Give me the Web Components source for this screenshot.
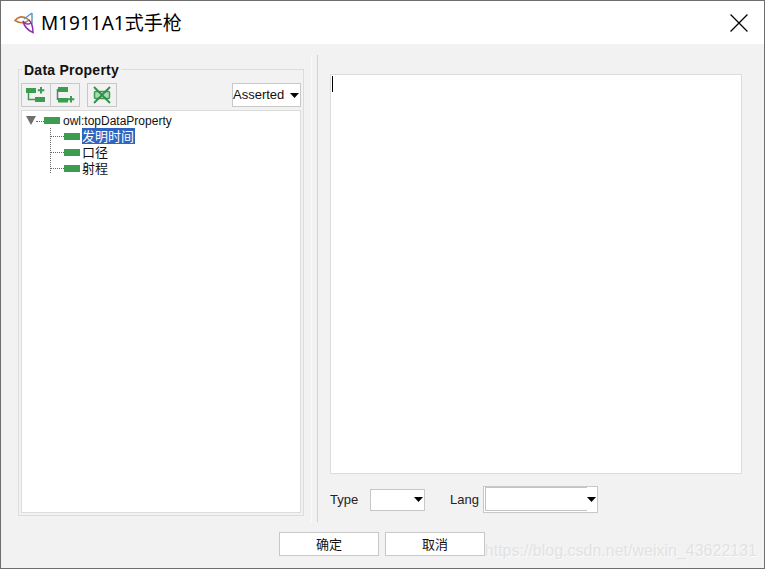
<!DOCTYPE html>
<html>
<head>
<meta charset="utf-8">
<title>M1911A1</title>
<style>
  html, body { margin: 0; padding: 0; }
  body { font-family: "Liberation Sans", "Noto Sans CJK SC", sans-serif; color: #000; }
</style>
</head>
<body>
<script>
const define = (name, css, html) => {
  customElements.define(name, class extends HTMLElement {
    constructor() {
      super();
      this.attachShadow({ mode: 'open' });
      this.shadowRoot.innerHTML = `<style>${css}</style>${html}`;
    }
  });
};

const ARROW = `<svg width="9" height="5" viewBox="0 0 9 5"><path d="M0 0h9L4.500 5z" fill="#000"/></svg>`;

define('x-titlebar', `
  :host { display: flex; align-items: center; height: 43px; background: #fff; flex: none; }
  .logo { margin-left: 13px; width: 22px; height: 22px; flex: none; }
  .text { margin-left: 5px; font: 19px/24px "Noto Sans", "Noto Sans CJK SC", sans-serif; color: #000; flex: 1; }
  .close { width: 18px; height: 18px; margin-right: 16px; flex: none; }
`, `
  <svg class="logo" viewBox="0 0 22 22" fill="none">
    <path d="M1 8.500C5 4 10 4 15 8C12 11 6 12 1 8.500Z" stroke="#c07a3c" stroke-width="1.600"/>
    <path d="M18 1L10 7M18 1L18 12" stroke="#5b9ac9" stroke-width="1.500"/>
    <path d="M9 9C10 14 13 18 19 20.500C19 15 18 11 15 8M9 9C10 12 14 13 17 11" stroke="#8a2fa8" stroke-width="1.500"/>
  </svg>
  <div class="text"><slot></slot></div>
  <svg class="close" viewBox="0 0 16 16"><path d="M.5.5l15 15M15.500.5l-15 15" stroke="#000" stroke-width="1.100" fill="none"/></svg>
`);

define('x-group', `
  :host { display: block; position: relative; box-sizing: border-box; border: 1px solid #dcdcdc; height: 447px; width: 286px; }
  .legend { position: absolute; top: -8px; left: 3px; padding: 0 2px; background: #f2f2f2; font: bold 14px/17px "Liberation Sans", sans-serif; letter-spacing: .25px; color: #111; }
  .body { display: flex; flex-direction: column; gap: 3px; padding: 13px 2px 2px 2px; height: 100%; box-sizing: border-box; }
`, `
  <div class="legend"><slot name="legend"></slot></div>
  <div class="body"><slot></slot></div>
`);

define('x-toolbar', `
  :host { display: flex; height: 24px; flex: none; }
  .spacer { flex: 1; }
`, `<slot name="tools"></slot><div class="spacer"></div><slot name="end"></slot>`);

define('x-tool', `
  :host { display: block; box-sizing: border-box; width: 30px; height: 24px; border: 1px solid #c8c8c8; background: #f2f2f2; margin-right: -1px; }
  :host([gap]) { margin-left: 8px; }
  ::slotted(svg) { display: block; }
`, `<slot></slot>`);

define('x-combo', `
  :host { display: flex; align-items: center; box-sizing: border-box; background: #fff; border: 1px solid #c8c8c8; font: 13px/16px "Liberation Sans", sans-serif; color: #111; }
  .value { flex: 1; white-space: nowrap; }
  svg { margin-right: 1px; flex: none; }
  :host([inset]) .value { align-self: stretch; margin: 0 0 1px 1px; border: solid #c4c4c4; border-width: 1px 0 1px 1px; }
`, `<span class="value"><slot></slot></span>${ARROW}`);

define('x-tree', `
  :host { display: block; box-sizing: border-box; flex: 1; background: #fff; border: 1px solid #dcdcdc; padding: 2px 0 0 4px; }
`, `<slot></slot>`);

define('x-tree-root', `
  :host { display: block; }
  .row { display: flex; align-items: center; height: 15px; }
  .tri { width: 0; height: 0; border-left: 5px solid transparent; border-right: 5px solid transparent; border-top: 9px solid #6f6f6f; flex: none; }
  .dash { width: 8px; border-top: 1px dotted #666; flex: none; margin-top: 1px; }
  .leaf { width: 16px; height: 7px; background: #3c9c50; flex: none; margin-top: -1px; }
  .label { margin-left: 3px; font: 12px/16px "Liberation Sans", sans-serif; color: #111; }
  .kids { margin-left: 24px; border-left: 1px dotted #666; height: 45px; }
`, `
  <div class="row"><span class="tri"></span><span class="dash"></span><span class="leaf"></span><span class="label"><slot name="label"></slot></span></div>
  <div class="kids"><slot></slot></div>
`);

define('x-tree-node', `
  :host { display: flex; align-items: center; height: 16px; }
  .dash { width: 13px; border-top: 1px dotted #666; flex: none; }
  .leaf { width: 16px; height: 7px; background: #3c9c50; flex: none; }
  .label { margin-left: 2px; padding: 0 1px 0 0; font: 13px/16px "Noto Sans CJK SC", sans-serif; color: #111; height: 16px; }
  :host([selected]) .label { background: #2f65c0; color: #fff; }
`, `<span class="dash"></span><span class="leaf"></span><span class="label"><slot></slot></span>`);

define('x-splitter', `
  :host { display: block; width: 7px; height: 467px; margin: 11px 0 0 7px; border-left: 1px solid #fafafa; border-right: 1px solid #d2d2d2; box-sizing: border-box; flex: none; }
`, ``);

define('x-editor', `
  :host { display: block; position: relative; box-sizing: border-box; width: 412px; height: 400px; background: #fff; border: 1px solid #dcdcdc; }
  .caret { position: absolute; left: 1px; top: 1px; width: 1px; height: 16px; background: #000; }
`, `<div class="caret"></div>`);

define('x-field-row', `
  :host { display: flex; align-items: center; height: 27px; margin-top: 12px; font: 13px/16px "Liberation Sans", sans-serif; color: #222; }
`, `<slot></slot>`);

define('x-button', `
  :host { display: flex; align-items: center; justify-content: center; box-sizing: border-box; width: 100px; height: 24px; background: #fff; border: 1px solid #c8c8c8; font: 13px/16px "Noto Sans CJK SC", sans-serif; color: #111; }
`, `<slot></slot>`);

define('x-dialog', `
  :host { display: flex; flex-direction: column; position: relative; box-sizing: border-box; width: 765px; height: 569px; background: #f2f2f2; border: 1px solid #6e6e6e; overflow: hidden; }
  .main { display: flex; flex: 1; min-height: 0; padding: 0 0 0 17px; }
  .left { padding-top: 25px; flex: none; }
  .right { padding: 30px 0 0 12px; flex: none; }
  .buttons { display: flex; gap: 6px; padding: 0 0 12px 278px; flex: none; }
  .mark { position: absolute; right: 7px; bottom: 7px; font: 16px/20px "Liberation Sans", sans-serif; color: #e2e2e2; text-shadow: 1px 1px 0 #fafafa; white-space: nowrap; }
`, `
  <slot name="title"></slot>
  <div class="main">
    <div class="left"><slot name="left"></slot></div>
    <slot name="split"></slot>
    <div class="right"><slot name="right"></slot></div>
  </div>
  <div class="buttons"><slot name="buttons"></slot></div>
  <div class="mark"><slot name="mark"></slot></div>
`);

document.body.innerHTML = `
<x-dialog>
  <x-titlebar slot="title">M1911A1式手枪</x-titlebar>

  <x-group slot="left">
    <span slot="legend">Data Property</span>
    <x-toolbar>
      <x-tool slot="tools">
        <svg width="28" height="22" viewBox="0 0 28 22" fill="none">
          <rect x="4" y="4" width="10" height="5" fill="#3c9c50"/>
          <rect x="13" y="13" width="10" height="5" fill="#3c9c50"/>
          <path d="M6.500 9v6.500h6.500" stroke="#3c9c50" stroke-width="1.500"/>
          <path d="M19 3v6.500M15.800 6.300h6.500" stroke="#3c9c50" stroke-width="2"/>
        </svg>
      </x-tool>
      <x-tool slot="tools">
        <svg width="28" height="22" viewBox="0 0 28 22" fill="none">
          <rect x="7" y="3" width="10" height="5" fill="#3c9c50"/>
          <rect x="7" y="14" width="10" height="4.500" fill="#3c9c50"/>
          <path d="M6.500 5v11" stroke="#5f7f68" stroke-width="1.500"/>
          <path d="M20 12v6.500M16.800 15.300h6.500" stroke="#3c9c50" stroke-width="2"/>
        </svg>
      </x-tool>
      <x-tool slot="tools" gap>
        <svg width="28" height="22" viewBox="0 0 28 22" fill="none">
          <rect x="6.500" y="7.500" width="15" height="7" rx="1" fill="#a9dbb4" stroke="#3c9c50" stroke-width="1.500"/>
          <path d="M6 3l16 16M22 3L6 19" stroke="#2f8f48" stroke-width="1.800"/>
        </svg>
      </x-tool>
      <x-combo slot="end" style="width:69px;height:24px">Asserted</x-combo>
    </x-toolbar>
    <x-tree>
      <x-tree-root>
        <span slot="label">owl:topDataProperty</span>
        <x-tree-node selected>发明时间</x-tree-node>
        <x-tree-node>口径</x-tree-node>
        <x-tree-node>射程</x-tree-node>
      </x-tree-root>
    </x-tree>
  </x-group>

  <x-splitter slot="split"></x-splitter>

  <div slot="right">
    <x-editor></x-editor>
    <x-field-row>
      <span style="width:40px">Type</span>
      <x-combo style="width:55px;height:22px"></x-combo>
      <span style="width:33px;margin-left:25px">Lang</span>
      <x-combo inset style="width:115px;height:27px"></x-combo>
    </x-field-row>
  </div>

  <x-button slot="buttons">确定</x-button>
  <x-button slot="buttons">取消</x-button>

  <span slot="mark">https://blog.csdn.net/weixin_43622131</span>
</x-dialog>`;
</script>
</body>
</html>
